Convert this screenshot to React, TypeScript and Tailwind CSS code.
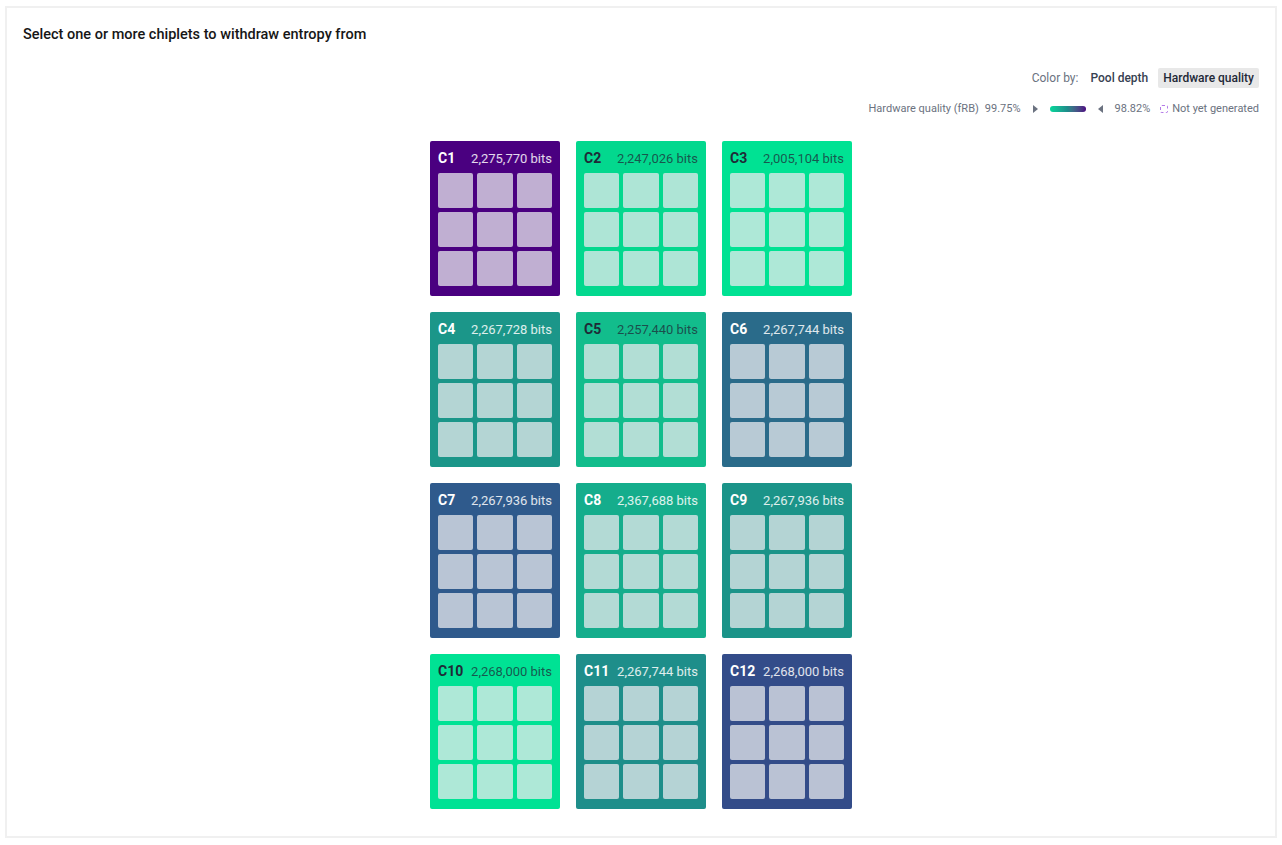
import React from 'react';

interface Chiplet {
  id: string;
  bits: string;
  bg: string;
  dark: boolean;
}

const chiplets: Chiplet[] = [
  { id: 'C1', bits: '2,275,770', bg: 'bg-[#4a0080]', dark: true },
  { id: 'C2', bits: '2,247,026', bg: 'bg-[#03d88e]', dark: false },
  { id: 'C3', bits: '2,005,104', bg: 'bg-[#00e293]', dark: false },
  { id: 'C4', bits: '2,267,728', bg: 'bg-[#1b9689]', dark: true },
  { id: 'C5', bits: '2,257,440', bg: 'bg-[#12bd8c]', dark: false },
  { id: 'C6', bits: '2,267,744', bg: 'bg-[#2a6b8a]', dark: true },
  { id: 'C7', bits: '2,267,936', bg: 'bg-[#2f5a8c]', dark: true },
  { id: 'C8', bits: '2,367,688', bg: 'bg-[#15ad8c]', dark: true },
  { id: 'C9', bits: '2,267,936', bg: 'bg-[#1b9489]', dark: true },
  { id: 'C10', bits: '2,268,000', bg: 'bg-[#00e294]', dark: false },
  { id: 'C11', bits: '2,267,744', bg: 'bg-[#1e8e8a]', dark: true },
  { id: 'C12', bits: '2,268,000', bg: 'bg-[#334c89]', dark: true },
];

function ChipletCard({ chip }: { chip: Chiplet }) {
  return (
    <button className={`w-[130px] rounded-[2px] ${chip.bg} px-2 pb-[10px] pt-[8px] text-left`}>
      <div className="mb-[6px] flex h-[18px] items-center justify-between">
        <span className={`text-[14px] font-bold ${chip.dark ? 'text-white' : 'text-[#1f2a37]'}`}>{chip.id}</span>
        <span className={`text-[13px] ${chip.dark ? 'text-white/85' : 'text-[#1f2a37]/75'}`}>{chip.bits} bits</span>
      </div>
      <div className="grid grid-cols-3 gap-[4px]">
        {Array.from({ length: 9 }).map((_, i) => (
          <div key={i} className="h-[35px] rounded-[2px] bg-[#e8e9ee]/75" />
        ))}
      </div>
    </button>
  );
}

export default function App() {
  return (
    <div className="min-h-[845px] bg-white p-[5px] pt-[6px] font-['Roboto',sans-serif] text-[#1f2937]">
      <div className="h-[832px] border-2 border-[#f0f0f0] px-4 pt-[16px]">
        <h2 className="text-[14.5px] font-medium text-[#161616]">Select one or more chiplets to withdraw entropy from</h2>

        <div className="mt-[22px] flex items-center justify-end text-[12px]">
          <span className="mr-[6px] text-[#6b7280]">Color by:</span>
          <button className="mr-[4px] h-[20px] rounded-[2px] px-[6px] font-medium text-[#374151]">Pool depth</button>
          <button className="h-[20px] rounded-[2px] bg-[#e8e8e8] px-[5px] font-medium text-[#1f2937]">Hardware quality</button>
        </div>

        <div className="mt-[13px] flex items-center justify-end gap-[6px] text-[11px] text-[#6b7280]">
          <span>Hardware quality (fRB)</span>
          <span>99.75%</span>
          <svg className="ml-[6px]" width="5" height="8" viewBox="0 0 5 8"><path d="M0 0 L5 4 L0 8 Z" fill="#6b7280" /></svg>
          <div className="mx-[6px] h-[6px] w-[36px] rounded-full bg-gradient-to-r from-[#00d89a] via-[#1e8a8a] to-[#4a0080]" />
          <svg width="5" height="8" viewBox="0 0 5 8"><path d="M5 0 L0 4 L5 8 Z" fill="#6b7280" /></svg>
          <span className="ml-[6px]">98.82%</span>
          <span className="ml-[4px] flex items-center gap-[4px]">
            <span className="inline-block h-[8px] w-[8px] rounded-[2px] border border-dashed border-[#b47be8]" />
            Not yet generated
          </span>
        </div>

        <div className="mt-[24px] flex justify-center">
          <div className="grid grid-cols-3 gap-x-[16px] gap-y-[16px]">
            {chiplets.map((c) => (
              <ChipletCard key={c.id} chip={c} />
            ))}
          </div>
        </div>
      </div>
    </div>
  );
}
